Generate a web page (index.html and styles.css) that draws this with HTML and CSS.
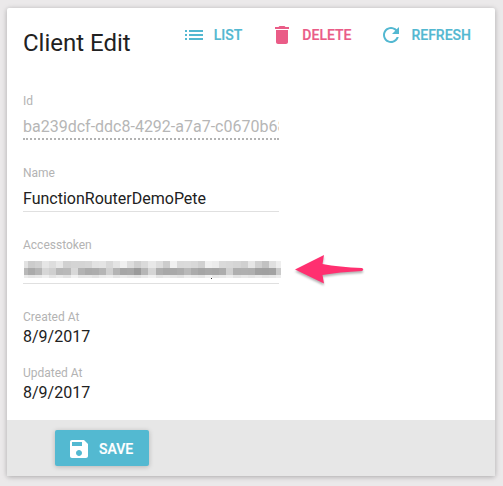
FILE: index.html
```html
<!DOCTYPE html>
<html lang="en">
<head>
<meta charset="utf-8">
<title>Client Edit</title>
<link rel="stylesheet" href="styles.css">
</head>
<body>
<main class="card">
  <header class="header">
    <h1 class="title">Client Edit</h1>
    <nav class="actions">
      <a class="action list"><svg viewBox="0 0 24 24"><path d="M3 13h2v-2H3v2zm0 4h2v-2H3v2zm0-8h2V7H3v2zm4 4h14v-2H7v2zm0 4h14v-2H7v2zM7 7v2h14V7H7z"/></svg><span>LIST</span></a>
      <a class="action delete"><svg viewBox="0 0 24 24"><path d="M6 19c0 1.1.9 2 2 2h8c1.1 0 2-.9 2-2V7H6v12zM19 4h-3.500l-1-1h-5l-1 1H5v2h14V4z"/></svg><span>DELETE</span></a>
      <a class="action refresh"><svg viewBox="0 0 24 24"><path d="M17.650 6.350C16.200 4.900 14.210 4 12 4c-4.420 0-7.990 3.580-7.990 8s3.570 8 7.990 8c3.730 0 6.840-2.550 7.730-6h-2.080c-.82 2.330-3.040 4-5.650 4-3.310 0-6-2.690-6-6s2.690-6 6-6c1.660 0 3.140.69 4.220 1.780L13 11h7V4l-2.350 2.350z"/></svg><span>REFRESH</span></a>
    </nav>
  </header>
  <section class="form">
    <div class="field"><div class="label">Id</div><div class="value disabled">ba239dcf-ddc8-4292-a7a7-c0670b68</div></div>
    <div class="field"><div class="label">Name</div><div class="value">FunctionRouterDemoPete</div></div>
    <div class="field token"><div class="label">Accesstoken</div><div class="value"><svg class="mosaic" width="258" height="18" shape-rendering="crispEdges"></svg></div>
      <svg class="arrow" width="74" height="40" viewBox="0 0 74 40"><path d="M2 19.500 31 5 29.500 14Q46 17 69 18Q71.500 19.500 69 21Q46 22 29.500 25L31 33.500Z"/></svg>
    </div>
    <div class="field plain"><div class="label">Created At</div><div class="text">8/9/2017</div></div>
    <div class="field plain"><div class="label">Updated At</div><div class="text">8/9/2017</div></div>
  </section>
  <footer class="footer">
    <button class="save"><svg viewBox="0 0 24 24"><path d="M17 3H5c-1.110 0-2 .9-2 2v14c0 1.100.89 2 2 2h14c1.100 0 2-.9 2-2V7l-4-4zm-5 16c-1.660 0-3-1.340-3-3s1.340-3 3-3 3 1.340 3 3-1.340 3-3 3zm3-10H5V5h10v4z"/></svg><span>SAVE</span></button>
  </footer>
</main>
<script src="mosaic.js"></script>
</body>
</html>
```
FILE: styles.css
```css
* { box-sizing: border-box; }
body {
  margin: 0;
  height: 486px;
  padding: 8px 8px 10px 7px;
  overflow: hidden;
  background: #ebe9ea;
  font-family: Roboto, sans-serif;
  color: #212121;
}
.card {
  display: flex;
  flex-direction: column;
  height: 468px;
  background: #fff;
  border-radius: 2px;
  box-shadow: 0 1px 6px rgba(0, 0, 0, .15), 0 1px 4px rgba(0, 0, 0, .14);
}
.header {
  display: flex;
  flex-shrink: 0;
  justify-content: space-between;
  height: 85px;
  padding: 0 24px 0 16px;
}
.title {
  margin: 17px 0 0;
  font-size: 24px;
  line-height: 36px;
  font-weight: 400;
  white-space: nowrap;
}
.actions { display: flex; height: 36px; margin-top: 9px; gap: 28px; }
.action {
  display: flex;
  align-items: center;
  font-size: 14px;
  font-weight: 500;
  color: #53b8d1;
}
.action span, .save span { -webkit-text-stroke: .2px currentColor; }
.action svg { width: 24px; height: 24px; margin-right: 8px; fill: currentColor; }
.action.delete { color: #ea5c87; }
.form { flex: 1; min-height: 0; padding-left: 16px; }
.field { position: relative; width: 256px; height: 72px; }
.label { height: 16px; font-size: 12px; line-height: 16px; color: #b3b3b3; }
.value {
  height: 31px;
  padding-top: 7px;
  overflow: hidden;
  border-bottom: 1px solid #e0e0e0;
  font-size: 16px;
  line-height: 21px;
  white-space: nowrap;
}
.disabled { border-bottom: 2px dotted #b3b3b3; color: #b6b6b6; }
.token .value { overflow: visible; }
.mosaic { display: block; margin-top: 1px; }
.arrow {
  position: absolute;
  left: 270px;
  top: 13px;
  fill: #ff3070;
  filter: drop-shadow(0 2px 1px rgba(0, 0, 0, .3));
}
.plain { height: 56px; }
.text { padding-top: 1px; font-size: 16px; line-height: 22px; }
.footer { flex-shrink: 0; height: 56px; padding: 10px 48px; background: #e7e7e7; }
.save {
  display: flex;
  align-items: center;
  width: 94px;
  height: 36px;
  padding: 1px 0 0 12px;
  border: 0;
  border-radius: 2px;
  background: #53b9d1;
  color: #fff;
  font: 500 14px Roboto, sans-serif;
  box-shadow: 0 1px 5px rgba(0, 0, 0, .22);
}
.save svg { width: 24px; height: 24px; margin-right: 8px; fill: #fff; }
```
FILE: mosaic.js
```js
// Grey levels of the redacted token, one hex byte per tile.
const rows = [
  { y: 0, h: 7, tones: "e2 cc d1 e6 dd e8 d1 d4 d4 d6 e2 e4 d8 e4 f0 dd cf da e8 dd cc f1 da db d8 d0 f0 ec da d8 d5 d0 e6 d0 c2 e0 ee" },
  { y: 7, h: 7, tones: "b8 aa b5 d6 cf b7 b9 d8 b3 ab ad b5 d0 b4 a6 a8 9b b6 d5 ae a8 a9 ad b9 ab a5 a9 a7 ac d0 af b0 af a1 a0 a2 ca" },
  { y: 14, h: 3, tones: "eb e5 e8 f0 e4 eb e4 f2 e7 e8 e3 eb ee e5 ea e6 e2 ea f1 e4 e9 e6 e2 ec e8 e5 f0 e6 e9 ee e4 e9 e5 ea e4 e7 ed" }
];
const svg = document.querySelector(".mosaic");
const edge = i => i === 0 ? 1 : Math.round(5 + (i - 1) * 7.086);
function rect(x, y, w, h, fill) {
  const r = document.createElementNS("http://www.w3.org/2000/svg", "rect");
  Object.entries({ x, y, width: w, height: h, fill }).forEach(([k, v]) => r.setAttribute(k, v));
  svg.append(r);
}
for (const row of rows) {
  row.tones.split(" ").forEach((t, i) =>
    rect(edge(i), row.y, Math.min(edge(i + 1), 258) - edge(i), row.h, "#" + t + t + t));
}
rect(188, 17, 1, 1, "#333");
```
